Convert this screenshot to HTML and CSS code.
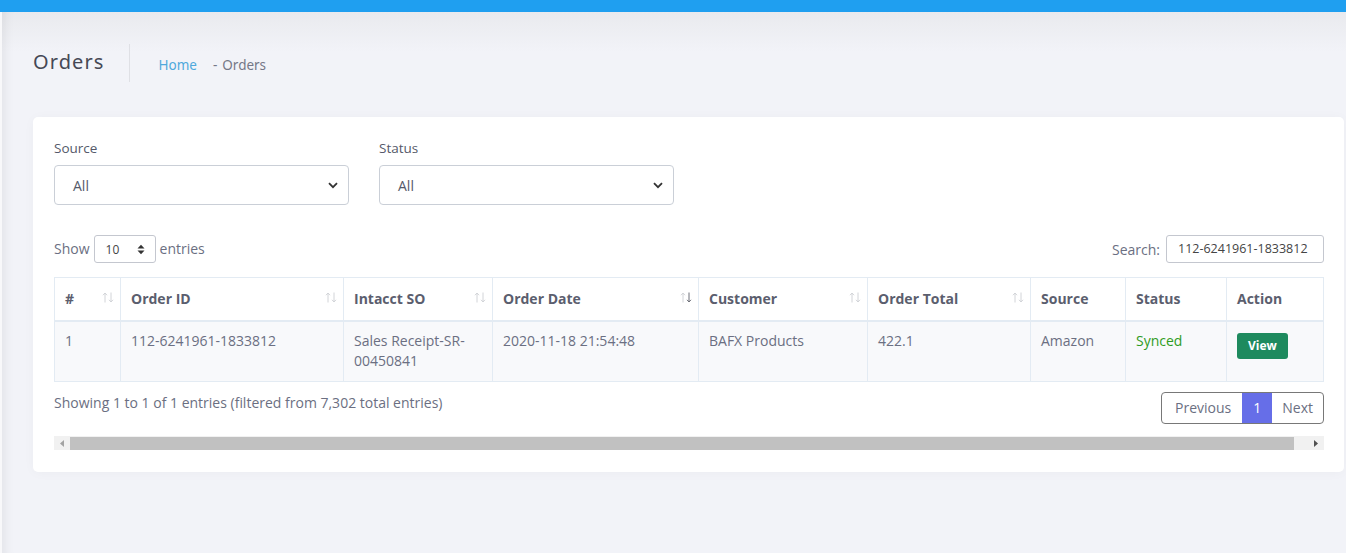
FILE: index.html
```html
<!DOCTYPE html>
<html>
<head>
<meta charset="utf-8">
<link rel="stylesheet" href="styles.css">
</head>
<body>
<div class="topbar"></div>
<div class="page">
  <div class="content-header">
    <h1 class="title">Orders</h1>
    <div class="crumbs"><a class="home">Home</a><span class="sep">-</span><span class="cur">Orders</span></div>
  </div>
  <div class="card">
    <div class="filters">
      <div class="fgroup">
        <label class="flabel">Source</label>
        <div class="fselect"><span>All</span>
          <svg class="chev" width="10" height="7" viewBox="0 0 10 7"><path d="M1 1.2 L5 5.2 L9 1.2" fill="none" stroke="#333" stroke-width="1.8"/></svg>
        </div>
      </div>
      <div class="fgroup">
        <label class="flabel">Status</label>
        <div class="fselect"><span>All</span>
          <svg class="chev" width="10" height="7" viewBox="0 0 10 7"><path d="M1 1.2 L5 5.2 L9 1.2" fill="none" stroke="#333" stroke-width="1.8"/></svg>
        </div>
      </div>
    </div>
    <div class="toolbar">
      <div class="length">Show
        <div class="lsel"><span>10</span>
          <svg width="8" height="11" viewBox="0 0 8 11"><path d="M0.5 4.5 L4 0.8 L7.5 4.5 Z M0.5 6.5 L4 10.2 L7.5 6.5 Z" fill="#333"/></svg>
        </div>entries</div>
      <div class="search">Search:<div class="sinput">112-6241961-1833812</div></div>
    </div>
    <table class="tbl">
      <colgroup>
        <col style="width:66px"><col style="width:223px"><col style="width:149px"><col style="width:206px"><col style="width:169px"><col style="width:163px"><col style="width:95px"><col style="width:101px"><col style="width:97px">
      </colgroup>
      <thead>
        <tr>
          <th class="sort">#<svg class="arr" width="12" height="11" viewBox="0 0 12 11"><path d="M3 10.5V1 M1 3.2 L3 1 L5 3.2" fill="none" stroke="#d2d4d8" stroke-width="1"/><path d="M9 0.5V10 M7 7.8 L9 10 L11 7.8" fill="none" stroke="#d2d4d8" stroke-width="1"/></svg></th>
          <th class="sort">Order ID<svg class="arr" width="12" height="11" viewBox="0 0 12 11"><path d="M3 10.5V1 M1 3.2 L3 1 L5 3.2" fill="none" stroke="#d2d4d8" stroke-width="1"/><path d="M9 0.5V10 M7 7.8 L9 10 L11 7.8" fill="none" stroke="#d2d4d8" stroke-width="1"/></svg></th>
          <th class="sort">Intacct SO<svg class="arr" width="12" height="11" viewBox="0 0 12 11"><path d="M3 10.5V1 M1 3.2 L3 1 L5 3.2" fill="none" stroke="#d2d4d8" stroke-width="1"/><path d="M9 0.5V10 M7 7.8 L9 10 L11 7.8" fill="none" stroke="#d2d4d8" stroke-width="1"/></svg></th>
          <th class="sort">Order Date<svg class="arr" width="12" height="11" viewBox="0 0 12 11"><path d="M3 10.5V1 M1 3.2 L3 1 L5 3.2" fill="none" stroke="#d2d4d8" stroke-width="1"/><path d="M9 0.5V10 M7 7.8 L9 10 L11 7.8" fill="none" stroke="#6d6f78" stroke-width="1"/></svg></th>
          <th class="sort">Customer<svg class="arr" width="12" height="11" viewBox="0 0 12 11"><path d="M3 10.5V1 M1 3.2 L3 1 L5 3.2" fill="none" stroke="#d2d4d8" stroke-width="1"/><path d="M9 0.5V10 M7 7.8 L9 10 L11 7.8" fill="none" stroke="#d2d4d8" stroke-width="1"/></svg></th>
          <th class="sort">Order Total<svg class="arr" width="12" height="11" viewBox="0 0 12 11"><path d="M3 10.5V1 M1 3.2 L3 1 L5 3.2" fill="none" stroke="#d2d4d8" stroke-width="1"/><path d="M9 0.5V10 M7 7.8 L9 10 L11 7.8" fill="none" stroke="#d2d4d8" stroke-width="1"/></svg></th>
          <th>Source</th>
          <th>Status</th>
          <th>Action</th>
        </tr>
      </thead>
      <tbody>
        <tr>
          <td>1</td>
          <td>112-6241961-1833812</td>
          <td>Sales Receipt-SR-00450841</td>
          <td>2020-11-18 21:54:48</td>
          <td>BAFX Products</td>
          <td>422.1</td>
          <td>Amazon</td>
          <td class="synced">Synced</td>
          <td><a class="btn-view">View</a></td>
        </tr>
      </tbody>
    </table>
    <div class="footer">
      <div class="info">Showing 1 to 1 of 1 entries (filtered from 7,302 total entries)</div>
      <div class="pager"><span class="pg">Previous</span><span class="pg active">1</span><span class="pg">Next</span></div>
    </div>
    <div class="hscroll">
      <span class="sarrow"><svg width="4" height="7" viewBox="0 0 4 7"><path d="M4 0 L0 3.5 L4 7Z" fill="#a3a3a3"/></svg></span>
      <span class="thumb"></span>
      <span class="sarrow"><svg width="4" height="7" viewBox="0 0 4 7"><path d="M0 0 L4 3.5 L0 7Z" fill="#505050"/></svg></span>
    </div>
  </div>
</div>
</body>
</html>
```
FILE: styles.css
```css
html, body {
  margin: 0;
  padding: 0;
}
body {
  font-family: "Open Sans", "Noto Sans", sans-serif;
  font-size: 14px;
  color: #6b6f82;
  background: #f2f3f8;
  height: 553px;
  overflow: hidden;
}
.topbar {
  height: 12px;
  background: #1f9ff0;
}
.page {
  height: 541px;
  padding: 0 2px 0 31px;
  background: linear-gradient(to bottom, #e9eaee 0px, #f2f3f8 40px, #f2f3f8 100%);
  box-shadow: inset 12px 0 10px -8px rgba(0,0,0,0.06);
  border-left: 2px solid #f8f8fa;
  box-sizing: border-box;
}
.content-header {
  display: flex;
  align-items: center;
  padding-top: 32px;
  height: 38px;
  margin-bottom: 35px;
}
.title {
  margin: 0;
  font-family: "Noto Sans", sans-serif;
  font-weight: 400;
  font-size: 20px;
  letter-spacing: 1.1px;
  color: #464855;
  height: 38px;
  line-height: 36px;
  padding-right: 24px;
  border-right: 1px solid #dfe0e5;
}
.crumbs {
  padding-left: 29px;
  font-family: "Noto Sans", sans-serif;
  font-size: 13.5px;
  color: #757887;
  padding-top: 3px;
}
.home {
  color: #4fa9dc;
}
.sep {
  margin: 0 5px 0 16px;
}
.card {
  background: #fff;
  border-radius: 5px;
  padding: 21px 20px 22px 21px;
  box-shadow: 0 1px 12px rgba(0,0,0,0.03);
}
.filters {
  display: grid;
  grid-template-columns: repeat(4, 1fr);
  gap: 30px;
}
.flabel {
  display: block;
  line-height: 20px;
  font-size: 13.5px;
  color: #55596a;
  margin-bottom: 7px;
}
.fselect {
  height: 40px;
  border: 1px solid #cacfd7;
  border-radius: 4px;
  box-sizing: border-box;
  display: flex;
  align-items: center;
  justify-content: space-between;
  padding: 0 10px 0 18px;
  color: #55596a;
  font-size: 14px;
}
.toolbar {
  display: flex;
  justify-content: space-between;
  align-items: center;
  margin-top: 30px;
  height: 28px;
  margin-bottom: 14px;
}
.length {
  display: flex;
  align-items: center;
  gap: 4px;
  color: #6b6f82;
  margin-top: -2px;
}
.lsel {
  width: 62px;
  height: 28px;
  box-sizing: border-box;
  border: 1px solid #c4c7cf;
  border-radius: 3px;
  display: flex;
  align-items: center;
  justify-content: space-between;
  padding: 1px 10px 0 11px;
  font-size: 12px;
  color: #444;
  margin-top: 2px;
}
.search {
  display: flex;
  align-items: center;
  gap: 6px;
  color: #6b6f82;
}
.sinput {
  width: 158px;
  height: 28px;
  box-sizing: border-box;
  border: 1px solid #c4c7cf;
  border-radius: 3px;
  font-size: 12.5px;
  color: #444;
  padding: 0 10px 0 11px;
  line-height: 26px;
  white-space: nowrap;
  overflow: hidden;
}
.tbl {
  width: 1269px;
  border-collapse: collapse;
  table-layout: fixed;
}
.tbl th, .tbl td {
  border: 1px solid #e3ebf3;
  text-align: left;
  vertical-align: top;
  padding: 10px;
  line-height: 20px;
}
.tbl th {
  font-weight: 700;
  color: #5b5e6e;
  height: 22px;
  padding-top: 11px;
  padding-bottom: 9px;
  border-bottom: 2px solid #e3ebf3;
  position: relative;
}
.tbl tbody td {
  background: #f8f9fb;
  height: 40px;
  padding-top: 9px;
  padding-bottom: 10px;
  color: #6b6f82;
}
.arr {
  position: absolute;
  right: 6px;
  top: 14px;
}
.synced {
  color: #2f9c24 !important;
}
.btn-view {
  display: inline-block;
  margin-top: 2px;
  background: #1e8a5e;
  color: #fff;
  font-size: 12px;
  font-weight: 700;
  padding: 3px 11px;
  border-radius: 3px;
  line-height: 20px;
}
.footer {
  display: flex;
  justify-content: space-between;
  align-items: flex-start;
  margin-top: 10px;
}
.info {
  line-height: 20px;
  margin-top: 1px;
  color: #6b6f82;
}
.pager {
  display: flex;
  border: 1px solid #787878;
  border-radius: 4px;
  overflow: hidden;
  height: 32px;
  box-sizing: border-box;
}
.pg {
  padding: 0 10px;
  line-height: 30px;
  color: #6b6f82;
}
.pg:first-child {
  padding: 0 11px 0 13px;
}
.pg.active {
  background: #666ee8;
  color: #fff;
  padding: 0 11px 0 11px;
}
.hscroll {
  margin-top: 12px;
  height: 14px;
  background: #f1f1f1;
  display: flex;
  align-items: center;
}
.sarrow {
  width: 16px;
  height: 14px;
  display: flex;
  align-items: center;
  justify-content: center;
}
.thumb {
  flex: 1;
  height: 13px;
  background: #c1c1c1;
  margin-right: 14px;
}
```
